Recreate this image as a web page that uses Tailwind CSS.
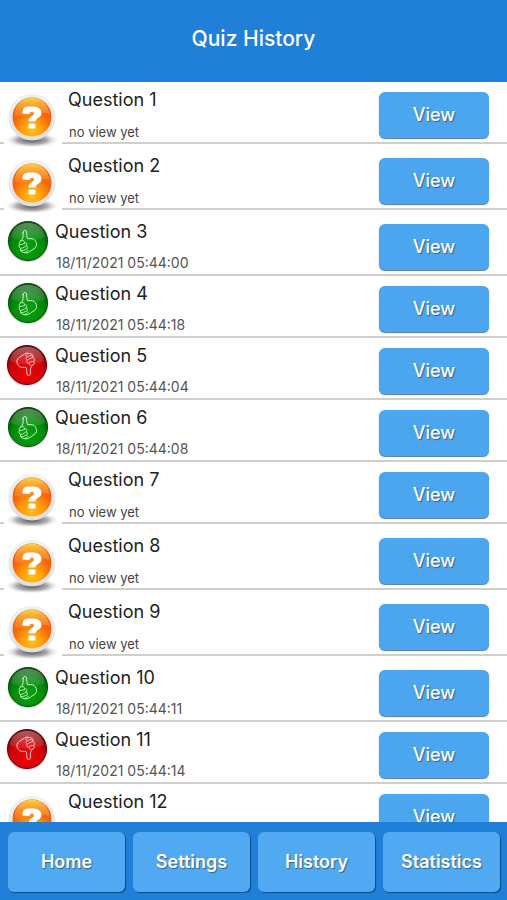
<!DOCTYPE html>
<html lang="en">
<head>
<meta charset="utf-8">
<meta name="viewport" content="width=device-width, initial-scale=1">
<title>Quiz History</title>
<script src="https://cdn.jsdelivr.net/npm/@tailwindcss/browser@4"></script>
</head>
<body class="flex h-dvh flex-col bg-white font-['Inter','Liberation_Sans',sans-serif] text-[#222]">

<svg class="absolute h-0 w-0" aria-hidden="true">
  <defs>
    <linearGradient id="ring" x1="0" y1="0" x2="0" y2="1">
      <stop offset="0" stop-color="#f3f3f3"/><stop offset="1" stop-color="#dedee2"/>
    </linearGradient>
    <radialGradient id="orange" cx=".5" cy=".85" r=".8">
      <stop offset="0" stop-color="#ffc21a"/><stop offset=".35" stop-color="#ff9a08"/><stop offset=".62" stop-color="#f8690c"/><stop offset="1" stop-color="#ea5510"/>
    </radialGradient>
    <linearGradient id="gloss" x1="0" y1="0" x2="0" y2="1">
      <stop offset="0" stop-color="#ffe04a" stop-opacity=".9"/><stop offset="1" stop-color="#ffa040" stop-opacity=".3"/>
    </linearGradient>
    <radialGradient id="shade">
      <stop offset="0" stop-color="#444" stop-opacity=".95"/><stop offset=".55" stop-color="#777" stop-opacity=".6"/><stop offset="1" stop-color="#fff" stop-opacity="0"/>
    </radialGradient>
    <radialGradient id="green" cx=".5" cy=".7" r=".65">
      <stop offset="0" stop-color="#06a30c"/><stop offset=".65" stop-color="#028a08"/><stop offset="1" stop-color="#034d08"/>
    </radialGradient>
    <radialGradient id="red" cx=".5" cy=".7" r=".65">
      <stop offset="0" stop-color="#ee0508"/><stop offset=".65" stop-color="#d10206"/><stop offset="1" stop-color="#6d0508"/>
    </radialGradient>
    <linearGradient id="shine" x1="0" y1="0" x2="0" y2="1">
      <stop offset="0" stop-color="#fff" stop-opacity=".35"/><stop offset="1" stop-color="#fff" stop-opacity=".06"/>
    </linearGradient>
    <g id="hand" fill="none" stroke-linejoin="round" stroke-linecap="round">
      <path d="M-4.500-9.500C-4.500-12-1.500-12.500-1-10C-.5-7.500-1-5.500 0-3.500C2-3 5-4 6.500-2.500C8.500-1 9.200 1.500 9 3.500C8.500 6 5 7.500 3 9C1 10.500-1.500 11.500-3.500 10.500C-6 10.500-7.500 8.500-7 6.500C-8.500 5.500-8.700 3.500-7.800 2.500C-8.800 1-8-.5-7-1C-5-2.500-3.800-4.500-4.500-9.500Z"/>
      <path d="M-7-1C-5-2-3-1.500-3 .5C-3 2-5.500 2.500-7.800 2.500M-3.200 1.500C-1.500 0-.5 1-.8 2.500C-1.200 4.500-4.500 6-7 6.500M-1 4C.5 4.500.2 6-1 7C-2.500 8-4.500 8.700-6.500 8.700M-.5 7.500C1 8.500 0 10-2.500 10.500" stroke-width=".9"/>
    </g>
    <symbol id="pending" viewBox="0 0 58 64">
      <path fill="#fff" d="M0 0H58V64H0Z"/>
      <ellipse cx="28" cy="56" rx="28" ry="8" fill="url(#shade)"/>
      <circle cx="28" cy="33" r="23.500" fill="url(#ring)"/>
      <circle cx="28" cy="33" r="19.500" fill="url(#orange)"/>
      <path d="M10.500 31C11 8 45 8 45.500 31C36 23 21 38 10.500 31Z" fill="url(#gloss)"/>
      <path d="M18.500 29.500C18 21.500 24 22.500 28.500 22.500C34 22.500 37.500 25 37.500 29C37.500 34 31.500 33.500 31.500 37.500H24.500C24.500 32 30 32 30 29.500C30 27 25.500 27 25.500 30Z" fill="#fff"/>
      <rect x="24.500" y="39.500" width="7" height="5" rx="1" fill="#fff"/>
    </symbol>
    <symbol id="passed" viewBox="0 0 44 44">
      <circle cx="22" cy="22.500" r="20.500" fill="#000" opacity=".18"/>
      <circle cx="22" cy="22" r="19.500" fill="url(#green)" stroke="#064a0a"/>
      <path d="M5 18C7-1 37-1 39 18C30 23 14 23 5 18Z" fill="url(#shine)"/>
      <use href="#hand" transform="translate(21.500 23)" stroke="#c5fbc0"/>
    </symbol>
    <symbol id="failed" viewBox="0 0 44 44">
      <circle cx="21" cy="22.500" r="20.500" fill="#000" opacity=".18"/>
      <circle cx="21" cy="22" r="19.500" fill="url(#red)" stroke="#650508"/>
      <path d="M4 18C6-1 36-1 38 18C29 23 13 23 4 18Z" fill="url(#shine)"/>
      <use href="#hand" transform="translate(20 21) rotate(180)" stroke="#ffc8c8"/>
    </symbol>
  </defs>
</svg>

<header class="flex h-[82px] shrink-0 items-center justify-center bg-[#2080d8] pb-1">
  <h1 class="text-[21px] leading-6 font-medium text-white">Quiz History</h1>
</header>

<main class="min-h-0 flex-1 overflow-y-auto [scrollbar-width:none]">
  <ul id="history"></ul>
</main>

<nav class="grid shrink-0 grid-cols-4 gap-2 bg-[#2080d8] pt-[10px] pr-[7px] pb-2 pl-2" aria-label="Main">
  <button class="h-[60px] rounded-md bg-[#50a9f1] text-lg font-semibold text-white shadow-[1px_1px_1px_#0b4a86] text-shadow-[1px_1px_1px_#35618a]">Home</button>
  <button class="h-[60px] rounded-md bg-[#50a9f1] text-lg font-semibold text-white shadow-[1px_1px_1px_#0b4a86] text-shadow-[1px_1px_1px_#35618a]">Settings</button>
  <button class="h-[60px] rounded-md bg-[#50a9f1] text-lg font-semibold text-white shadow-[1px_1px_1px_#0b4a86] text-shadow-[1px_1px_1px_#35618a]">History</button>
  <button class="h-[60px] rounded-md bg-[#50a9f1] text-lg font-semibold text-white shadow-[1px_1px_1px_#0b4a86] text-shadow-[1px_1px_1px_#35618a]">Statistics</button>
</nav>

<script>
const questions = [
  ["pending"],
  ["pending"],
  ["passed", "18/11/2021 05:44:00"],
  ["passed", "18/11/2021 05:44:18"],
  ["failed", "18/11/2021 05:44:04"],
  ["passed", "18/11/2021 05:44:08"],
  ["pending"],
  ["pending"],
  ["pending"],
  ["passed", "18/11/2021 05:44:11"],
  ["failed", "18/11/2021 05:44:14"],
  ["pending"],
];
const rowClass = {
  pending: "mb-1 flex h-[62px] items-start border-b-2 border-[#cfcfcf] pl-1 pr-[18px]",
  done: "flex h-[62px] items-start border-b-2 border-[#cfcfcf] pl-[6px] pr-[18px]",
};
const iconClass = {
  pending: "relative mt-[2px] mr-[6px] h-16 w-[58px] shrink-0",
  done: "mt-[5px] mr-[5px] h-11 w-11 shrink-0",
};
const noteClass = {
  pending: "pt-3 pl-px text-[13px] leading-4 text-[#444]",
  done: "pt-[11px] pl-px text-sm leading-4 text-[#555]",
};
document.getElementById("history").innerHTML = questions.map(([state, date], i) => {
  const kind = date ? "done" : "pending";
  return `<li class="${rowClass[kind]}">
    <svg class="${iconClass[kind]}" role="img" aria-label="${state}"><use href="#${state}"/></svg>
    <div class="min-w-0 flex-1 pt-[6px]">
      <h2 class="text-lg leading-6">Question ${i + 1}</h2>
      <p class="${noteClass[kind]}">${date || "no view yet"}</p>
    </div>
    <button class="mt-[10px] h-[46px] w-[110px] shrink-0 rounded-md bg-[#4ba6ef] pb-px text-lg font-medium text-white shadow-[0_1px_1px_#55789a] text-shadow-[1px_1px_1px_#35618a]" aria-label="View question ${i + 1}">View</button>
  </li>`;
}).join("");
</script>
</body>
</html>
